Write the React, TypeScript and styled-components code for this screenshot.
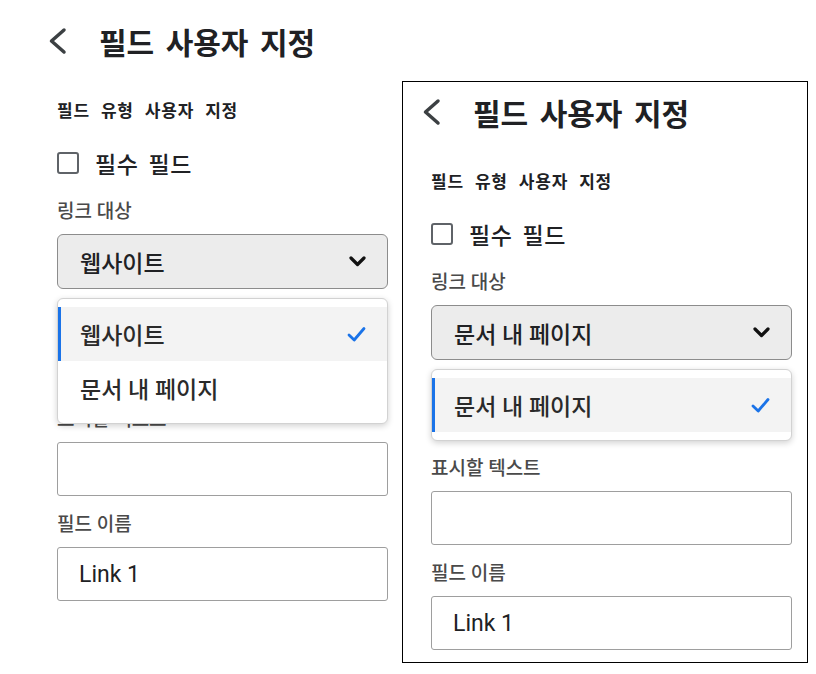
import styled, { createGlobalStyle } from 'styled-components'

const GlobalStyle = createGlobalStyle`
  body {
    margin: 0;
    background: #fff;
    font-family: Roboto, "Noto Sans CJK KR", sans-serif;
    color: #202124;
  }
`

const Page = styled.div`
  display: flex;
  align-items: flex-start;
  gap: 2px;
  width: 816px;
  height: 674px;
  overflow: hidden;
`

const Panel = styled.section<{ $framed?: boolean; $width: number }>`
  box-sizing: border-box;
  width: ${({ $width }) => $width}px;
  display: flex;
  flex-direction: column;
  margin-top: ${({ $framed }) => ($framed ? 81 : 11)}px;
  padding: ${({ $framed }) => ($framed ? '0 15px 12px 28px' : '0 12px 0 57px')};
  border: ${({ $framed }) => ($framed ? '1px solid #000' : 'none')};
  background: #fff;
`

const Header = styled.div`
  display: flex;
  align-items: center;
  height: 60px;
  margin-left: -10px;
`

const BackIcon = styled.svg`
  flex: none;
  margin-right: 32px;
`

const Title = styled.h1`
  margin: 0;
  font-size: 30px;
  font-weight: 700;
  word-spacing: 4px;
  color: #202124;
`

const SectionTitle = styled.h2`
  margin: 30px 0 0;
  font-size: 17px;
  line-height: 20px;
  font-weight: 700;
  letter-spacing: 0.8px;
  word-spacing: 6px;
  color: #202124;
`

const CheckRow = styled.label`
  display: flex;
  align-items: center;
  gap: 16px;
  height: 30px;
  margin-top: 27px;
  font-size: 23px;
  font-weight: 500;
  letter-spacing: 0.5px;
  word-spacing: 4px;
  color: #202124;
`

const CheckBox = styled.span`
  box-sizing: border-box;
  width: 22px;
  height: 22px;
  border: 2.5px solid #5f6368;
  border-radius: 3px;
`

const FieldLabel = styled.div<{ $gap: number }>`
  margin-top: ${({ $gap }) => $gap}px;
  font-size: 19px;
  line-height: 24px;
  font-weight: 500;
  color: #4a4a4a;
`

const SelectWrap = styled.div<{ $reserve: number }>`
  position: relative;
  margin-top: 10px;
  padding-bottom: ${({ $reserve }) => $reserve}px;
`

const SelectBox = styled.div`
  box-sizing: border-box;
  height: 55px;
  display: flex;
  align-items: center;
  justify-content: space-between;
  padding: 0 21px 0 22px;
  background: #ececec;
  border: 1.5px solid #8c8c8c;
  border-radius: 6px;
  font-size: 23px;
  font-weight: 500;
  color: #202124;
`

const Menu = styled.ul`
  position: absolute;
  top: 64px;
  left: 0;
  right: 0;
  z-index: 2;
  margin: 0;
  padding: 8px 0;
  list-style: none;
  background: #fff;
  border: 1px solid #d2d2d2;
  border-radius: 6px;
  box-shadow: 0 2px 6px rgba(0, 0, 0, 0.18);
`

const MenuItem = styled.li<{ $selected?: boolean }>`
  height: 54px;
  display: flex;
  align-items: center;
  justify-content: space-between;
  padding: 0 21px 0 19px;
  font-size: 23px;
  font-weight: 500;
  color: #2a2a2a;
  background: ${({ $selected }) => ($selected ? '#f3f3f3' : 'transparent')};
  border-left: 3px solid ${({ $selected }) => ($selected ? '#1a73e8' : 'transparent')};
`

const TextInput = styled.input`
  box-sizing: border-box;
  display: block;
  width: 100%;
  height: 54px;
  margin: 10px 0 0;
  padding: 0 21px;
  border: 1.5px solid #9e9e9e;
  border-radius: 3px;
  background: #fff;
  font-family: Roboto, "Noto Sans CJK KR", sans-serif;
  font-size: 23px;
  color: #202124;
  outline: none;
`

function BackArrow() {
  return (
    <BackIcon width="20" height="28" viewBox="0 0 20 28">
      <path d="M17 3 L4.5 14 L17 25" fill="none" stroke="#3c4043" strokeWidth="3.5" strokeLinecap="round" strokeLinejoin="round" />
    </BackIcon>
  )
}

function ChevronDown() {
  return (
    <svg width="17" height="11" viewBox="0 0 17 11">
      <path d="M2 2 L8.5 8.5 L15 2" fill="none" stroke="#111" strokeWidth="3.2" strokeLinecap="round" strokeLinejoin="round" />
    </svg>
  )
}

function Check() {
  return (
    <svg width="19" height="17" viewBox="0 0 19 17">
      <path d="M2 9 L7.2 14 L17 2.5" fill="none" stroke="#1a73e8" strokeWidth="2.8" strokeLinecap="round" strokeLinejoin="round" />
    </svg>
  )
}

type EditorProps = {
  framed?: boolean
  width: number
  selected: string
  options: string[]
  reserve: number
}

function FieldEditor({ framed, width, selected, options, reserve }: EditorProps) {
  return (
    <Panel $framed={framed} $width={width}>
      <Header>
        <BackArrow />
        <Title>필드 사용자 지정</Title>
      </Header>
      <SectionTitle>필드 유형 사용자 지정</SectionTitle>
      <CheckRow>
        <CheckBox />
        필수 필드
      </CheckRow>
      <FieldLabel $gap={22}>링크 대상</FieldLabel>
      <SelectWrap $reserve={reserve}>
        <SelectBox>
          {selected}
          <ChevronDown />
        </SelectBox>
        <Menu>
          {options.map((opt) => (
            <MenuItem key={opt} $selected={opt === selected}>
              {opt}
              {opt === selected && <Check />}
            </MenuItem>
          ))}
        </Menu>
      </SelectWrap>
      <FieldLabel $gap={17}>표시할 텍스트</FieldLabel>
      <TextInput readOnly value="" />
      <FieldLabel $gap={17}>필드 이름</FieldLabel>
      <TextInput readOnly value="Link 1" />
    </Panel>
  )
}

export default function App() {
  return (
    <Page>
      <GlobalStyle />
      <FieldEditor width={400} selected="웹사이트" options={['웹사이트', '문서 내 페이지']} reserve={102} />
      <FieldEditor framed width={406} selected="문서 내 페이지" options={['문서 내 페이지']} reserve={80} />
    </Page>
  )
}
